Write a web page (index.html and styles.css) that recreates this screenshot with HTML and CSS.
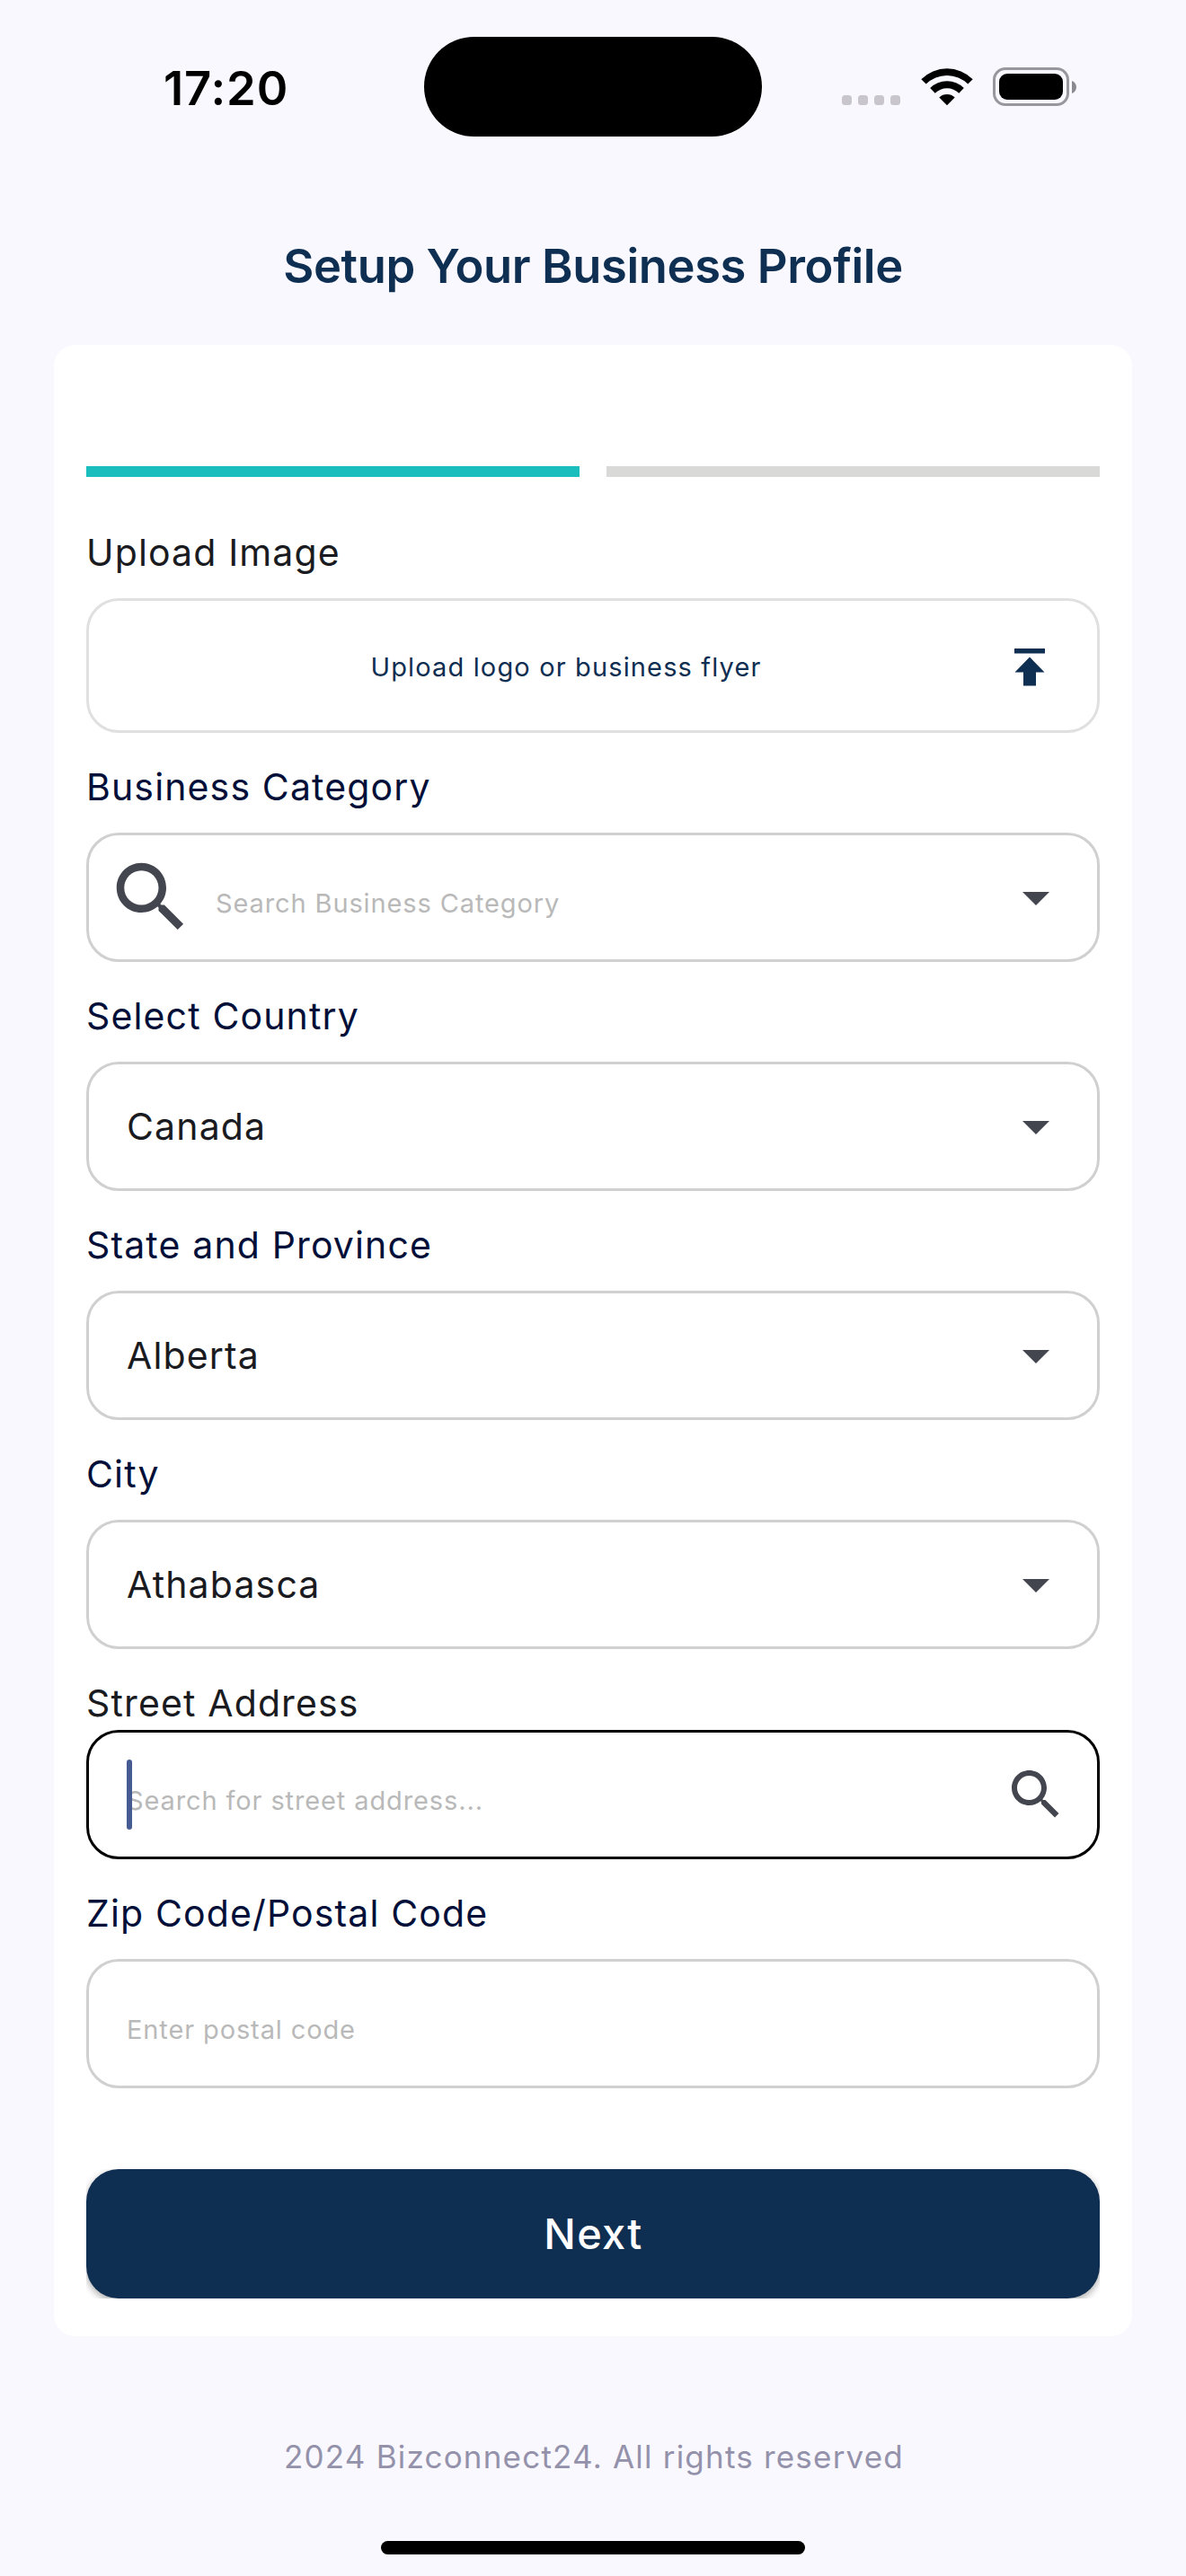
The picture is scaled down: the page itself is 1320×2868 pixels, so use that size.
FILE: index.html
```html
<!DOCTYPE html>
<html lang="en">
<head>
<meta charset="utf-8">
<title>Setup Your Business Profile</title>
<link rel="stylesheet" href="styles.css">
</head>
<body>
<svg class="symbols" width="0" height="0">
  <symbol id="search" viewBox="0 0 24 24"><path d="M15.5 14h-.79l-.28-.27C15.41 12.59 16 11.11 16 9.5 16 5.91 13.09 3 9.5 3S3 5.91 3 9.5 5.91 16 9.5 16c1.61 0 3.09-.59 4.23-1.57l.27.28v.79l5 4.99L20.49 19l-4.99-5zm-6 0C7.01 14 5 11.99 5 9.5S7.01 5 9.5 5 14 7.01 14 9.5 11.99 14 9.5 14z"/></symbol>
  <symbol id="drop" viewBox="0 0 24 24"><path d="M7 10l5 5 5-5z"/></symbol>
</svg>
<header class="status">
  <time class="clock">17:20</time>
  <div class="island"></div>
  <div class="indicators">
    <div class="signal"><i></i><i></i><i></i><i></i></div>
    <svg class="wifi" viewBox="0 0 58 43" width="58" height="43">
      <path d="M0.3 13.2 A40.5 40.5 0 0 1 57.7 13.2 L52.3 18.6 A33 33 0 0 0 5.7 18.6 Z"/>
      <path d="M10.2 23.1 A26.6 26.6 0 0 1 47.8 23.1 L42.3 28.8 A18.9 18.9 0 0 0 15.7 28.8 Z"/>
      <path d="M20.3 33.4 A12.6 12.6 0 0 1 37.7 33.4 L29 42.2 Z"/>
    </svg>
    <div class="battery"><div class="shell"><div class="charge"></div></div>
      <svg class="nub" viewBox="0 0 5 14" width="5" height="14"><path d="M0 0C3 1 5 4 5 7S3 13 0 14Z"/></svg>
    </div>
  </div>
</header>
<h1 class="title">Setup Your Business Profile</h1>
<main class="card">
  <div class="progress"><div class="step done"></div><div class="step"></div></div>
  <section class="field">
    <div class="label plain">Upload Image</div>
    <div class="box upload">
      <span class="upload-text">Upload logo or business flyer</span>
      <svg class="upload-icon" viewBox="0 0 72 72"><path d="M19 17h34v5.5H19zM36 26.5L52.5 43.5H43V58.5H29V43.5H19.5z"/></svg>
    </div>
  </section>
  <section class="field">
    <div class="label">Business Category</div>
    <div class="box with-icon">
      <svg class="icon large"><use href="#search"/></svg>
      <span class="hint">Search Business Category</span>
      <svg class="icon"><use href="#drop"/></svg>
    </div>
  </section>
  <section class="field">
    <div class="label">Select Country</div>
    <div class="box"><span class="value">Canada</span><svg class="icon"><use href="#drop"/></svg></div>
  </section>
  <section class="field">
    <div class="label">State and Province</div>
    <div class="box"><span class="value">Alberta</span><svg class="icon"><use href="#drop"/></svg></div>
  </section>
  <section class="field">
    <div class="label">City</div>
    <div class="box"><span class="value">Athabasca</span><svg class="icon"><use href="#drop"/></svg></div>
  </section>
  <section class="field">
    <div class="label plain tight">Street Address</div>
    <div class="box focused">
      <span class="caret"></span>
      <span class="hint">Search for street address...</span>
      <svg class="icon"><use href="#search"/></svg>
    </div>
  </section>
  <section class="field">
    <div class="label">Zip Code/Postal Code</div>
    <div class="box"><span class="hint">Enter postal code</span></div>
  </section>
  <div class="action"><button class="next" type="button">Next</button></div>
</main>
<footer class="footer">2024 Bizconnect24. All rights reserved</footer>
<div class="home-bar"></div>
</body>
</html>
```

FILE: styles.css
```css
* { box-sizing: border-box; }
body {
  margin: 0;
  width: 1320px;
  height: 2868px;
  background: #f9f8ff;
  font-family: Inter, "Liberation Sans", sans-serif;
  overflow: hidden;
}
.symbols { display: none; }

/* Status bar */
.status {
  display: grid;
  grid-template-columns: 472px 376px 1fr;
  align-items: center;
  height: 152px;
  padding-top: 41px;
}
.clock {
  padding: 2px 0 0 182px;
  font-size: 52.5px;
  font-weight: 600;
  line-height: 64px;
  letter-spacing: 0.9px;
  color: #000;
}
.island { height: 111px; border-radius: 56px; background: #000; }
.indicators { display: flex; align-items: center; padding-left: 89px; }
.signal { display: flex; gap: 7px; padding-top: 30px; }
.signal i { width: 11px; height: 11px; border-radius: 3.5px; background: #c8c6cc; }
.wifi { margin-left: 23px; }
.battery { display: flex; align-items: center; gap: 3px; margin-left: 22px; }
.shell {
  width: 85px;
  height: 43px;
  padding: 4px;
  border: 3px solid #98979c;
  border-radius: 14px;
}
.charge { height: 29px; border-radius: 9px; background: #000; }
.nub { fill: #8b8a8f; }

/* Heading */
.title {
  margin: 112px 0 56px;
  font-size: 52.5px;
  font-weight: 600;
  line-height: 64px;
  letter-spacing: -0.4px;
  text-align: center;
  color: #0e2e52;
}

/* Form card */
.card {
  margin: 0 60px;
  padding: 135px 36px 42px;
  border-radius: 24px;
  background: #fff;
}
.progress { display: flex; gap: 30px; margin-bottom: 54px; }
.step { flex: 1; height: 12px; background: #d9d9d7; }
.step.done { background: #1abebd; }
.field + .field { margin-top: 30px; }
.label {
  margin-bottom: 21px;
  font-size: 41px;
  line-height: 60px;
  letter-spacing: 1.14px;
  color: #020f38;
}
.label.plain { color: #1a1b21; }
.label.tight { margin-bottom: 0; }
.box {
  position: relative;
  display: flex;
  align-items: center;
  height: 144px;
  padding: 0 32px 0 42px;
  border: 3px solid #d0d0d0;
  border-radius: 36px;
}
.box.with-icon { gap: 21px; padding-left: 18px; }
.box.focused { border-color: #000; }
.value, .hint { flex: 1; }
.value { font-size: 41px; letter-spacing: 1.15px; color: #1a1b21; }
.hint { padding-top: 13px; font-size: 29px; letter-spacing: 0.88px; color: #b9b9b9; }
.icon { width: 72px; height: 72px; fill: #44464f; }
.icon.large { width: 102px; height: 102px; }
.caret {
  position: absolute;
  z-index: 1;
  left: 42px;
  top: 30px;
  width: 6px;
  height: 78px;
  border-radius: 3px;
  background: #465b93;
}
.upload { height: 150px; padding: 0 39px 0 51px; border-color: #e0e0e0; }
.upload-text {
  flex: 1;
  padding-top: 3px;
  font-size: 29px;
  letter-spacing: 1.14px;
  text-align: center;
  color: #0e2e52;
}
.upload-icon { width: 72px; height: 72px; fill: #0e2e52; }
.action { margin-top: 90px; overflow: hidden; }
.next {
  display: block;
  width: 100%;
  height: 144px;
  padding: 0;
  border: 0;
  border-radius: 36px;
  background: #0e2e52;
  box-shadow: 0 3px 9px rgba(0, 0, 0, 0.35);
  font: 500 47px/144px Inter, "Liberation Sans", sans-serif;
  letter-spacing: 1.3px;
  text-indent: 1px;
  color: #fff;
}

/* Footer */
.footer {
  margin-top: 112px;
  padding-left: 2px;
  font-size: 35px;
  line-height: 44px;
  letter-spacing: 1.2px;
  text-align: center;
  color: #9492ab;
}
.home-bar {
  width: 472px;
  height: 15px;
  margin: 72px auto 0;
  border-radius: 8px;
  background: #000;
}
```
